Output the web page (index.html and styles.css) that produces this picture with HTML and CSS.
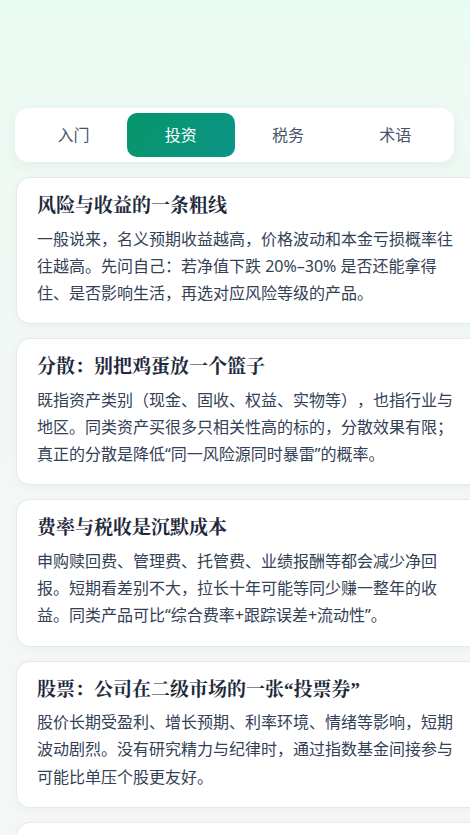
FILE: index.html
```html
<!DOCTYPE html>
<html lang="zh-CN">
<head>
    <meta charset="UTF-8">
    <meta name="viewport" content="width=device-width, initial-scale=1.0">
    <title>理财小课堂</title>
    <link rel="stylesheet" href="styles.css">
</head>
<body>
    <div class="page">
        <nav class="tabs">
            <button class="tab">入门</button>
            <button class="tab active">投资</button>
            <button class="tab">税务</button>
            <button class="tab">术语</button>
        </nav>

        <div class="cards">
            <div class="card">
                <h3>风险与收益的一条粗线</h3>
                <p>一般说来，名义预期收益越高，价格波动和本金亏损概率往往越高。先问自己：若净值下跌 20%–30% 是否还能拿得住、是否影响生活，再选对应风险等级的产品。</p>
            </div>
            <div class="card">
                <h3>分散：别把鸡蛋放一个篮子</h3>
                <p>既指资产类别（现金、固收、权益、实物等），也指行业与地区。同类资产买很多只相关性高的标的，分散效果有限；真正的分散是降低“同一风险源同时暴雷”的概率。</p>
            </div>
            <div class="card">
                <h3>费率与税收是沉默成本</h3>
                <p>申购赎回费、管理费、托管费、业绩报酬等都会减少净回报。短期看差别不大，拉长十年可能等同少赚一整年的收益。同类产品可比“综合费率+跟踪误差+流动性”。</p>
            </div>
            <div class="card">
                <h3>股票：公司在二级市场的一张“投票券”</h3>
                <p>股价长期受盈利、增长预期、利率环境、情绪等影响，短期波动剧烈。没有研究精力与纪律时，通过指数基金间接参与可能比单压个股更友好。</p>
            </div>
            <div class="card">
                <h3>债券：借钱给别人收利息</h3>
                <p>债券价格与利率反向变动，久期越长对利率越敏感。信用债还要看发行人能否按时还本付息，评级和行业景气度都值得留意，不要只盯票面利率。</p>
            </div>
            <div class="card">
                <h3>指数基金：买下一篮子市场</h3>
                <p>跟踪某个指数被动配置，费率通常更低、持仓透明。选择时先看指数编制规则，再比较跟踪误差、规模和流动性，宽基适合做长期底仓。</p>
            </div>
            <div class="card">
                <h3>定投：用时间摊平买入成本</h3>
                <p>按固定周期投入固定金额，下跌时买到更多份额，上涨时少买一些。它不能消除亏损，但能减少择时焦虑，关键在于坚持与合理的止盈计划。</p>
            </div>
            <div class="card">
                <h3>货币基金：活期的升级版</h3>
                <p>主要投资短期存单、国债等高流动性资产，波动很小，适合存放应急资金。七日年化收益会随市场利率变化，并不等于承诺的固定收益。</p>
            </div>
            <div class="card">
                <h3>再平衡：让比例回到计划</h3>
                <p>市场涨跌会让各类资产的占比偏离初始设定。每年或偏离超过一定幅度时调整一次，相当于纪律化地“高卖低买”，也能把风险控制在承受范围内。</p>
            </div>
            <div class="card">
                <h3>流动性：钱能多快变回现金</h3>
                <p>封闭期、赎回到账时间、二级市场成交量都会影响流动性。未来一两年内要用的钱，尽量不要放进锁定期长或波动大的产品里，避免被迫低价卖出。</p>
            </div>
            <div class="card">
                <h3>杠杆：放大收益也放大亏损</h3>
                <p>融资买入、场内杠杆产品都会让波动成倍放大，还可能触发强制平仓。普通投资者在没有充分理解机制和风险承受力之前，最好远离杠杆操作。</p>
            </div>
            <div class="card">
                <h3>回撤：比收益率更真实的体验</h3>
                <p>最大回撤描述从高点到低点的最大跌幅，决定了持有过程中的心理压力。比较产品时，把年化收益和最大回撤放在一起看，更能判断是否拿得住。</p>
            </div>
            <div class="card">
                <h3>应急金：投资之前先留后路</h3>
                <p>一般建议预留三到六个月的必要开支作为应急资金，放在随取随用的地方。有了这笔缓冲，市场下跌时就不必为了生活费而割肉离场。</p>
            </div>
            <div class="card">
                <h3>保险：先保障再理财</h3>
                <p>意外、医疗、重疾、定期寿险是家庭风险管理的基础。优先给家庭经济支柱配置足额保障，再考虑带储蓄或投资功能的保险产品。</p>
            </div>
            <div class="card">
                <h3>复利：时间是最好的朋友</h3>
                <p>收益再投资会让本金越滚越大，时间越长效果越明显。尽早开始、控制成本、避免大幅亏损，比追逐一时的高收益更能积累长期财富。</p>
            </div>
            <div class="card">
                <h3>警惕“保本高收益”</h3>
                <p>承诺稳赚不赔又远高于市场水平的收益，往往隐藏着极高风险甚至是骗局。遇到这类宣传，先查资质、看底层资产，拿不准就不投。</p>
            </div>
            <div class="card">
                <h3>记录与复盘</h3>
                <p>把每次买卖的理由、仓位和结果记下来，定期回看。复盘能帮助分辨运气与能力，也能及时发现自己容易犯的情绪化错误。</p>
            </div>
        </div>
    </div>
</body>
</html>
```

FILE: styles.css
```css
html,
body {
    height: 100%;
    margin: 0;
}
body {
    background: linear-gradient(180deg, #e9fcf3 0px, #f1f8f4 220px, #f4f7f6 600px);
    font-family: "Noto Sans", "Noto Sans CJK SC", sans-serif;
    color: #334155;
    text-spacing-trim: space-all;
}
.page {
    height: 100%;
    box-sizing: border-box;
    overflow-x: hidden;
    overflow-y: auto;
    padding: 108px 16px 40px 15px;
}
.page::-webkit-scrollbar {
    width: 8px;
}
.page::-webkit-scrollbar-track {
    background: transparent;
}
.page::-webkit-scrollbar-thumb {
    background: #c6c6c6;
    border-left: 2px solid transparent;
    border-right: 2px solid transparent;
    background-clip: padding-box;
}
.tabs {
    display: grid;
    grid-template-columns: repeat(4, 1fr);
    padding: 5px;
    background: #fff;
    border-radius: 14px;
    box-shadow: 0 4px 14px rgba(15, 60, 40, 0.06);
}
.tab {
    height: 44px;
    padding: 0 0 3px;
    border: none;
    border-radius: 10px;
    background: none;
    font-family: inherit;
    font-size: 16px;
    color: #475569;
    cursor: pointer;
}
.tab.active {
    background: linear-gradient(120deg, #059669, #0d9488);
    color: #fff;
}
.cards {
    display: flex;
    flex-direction: column;
    gap: 14px;
    margin-top: 15px;
    margin-left: 1px;
}
.card {
    width: 100%;
    padding: 15px 20px 16px;
    background: #fff;
    border: 1px solid #e3ebe8;
    border-radius: 14px;
    box-shadow: 0 2px 8px rgba(15, 60, 40, 0.04);
}
.card h3 {
    margin: 0 0 7px;
    font-family: "Liberation Serif", "Noto Serif CJK SC", serif;
    font-size: 19px;
    line-height: 1.35;
    font-weight: 700;
    color: #1e293b;
}
.card p {
    margin: 0;
    max-width: 26.5em;
    font-size: 16px;
    line-height: 1.7;
    color: #334155;
}
```
